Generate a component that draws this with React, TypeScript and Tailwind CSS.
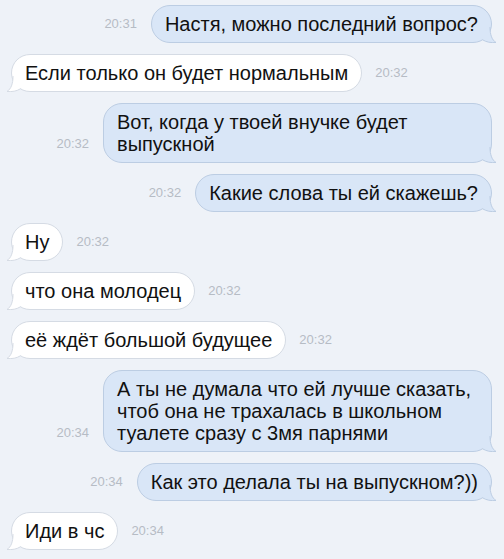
import React from 'react'

type Msg = { out: boolean; time: string; text: React.ReactNode; wide?: boolean }

const messages: Msg[] = [
  { out: true, time: '20:31', text: 'Настя, можно последний вопрос?' },
  { out: false, time: '20:32', text: 'Если только он будет нормальным' },
  { out: true, time: '20:32', wide: true, text: <>Вот, когда у твоей внучке будет<br />выпускной</> },
  { out: true, time: '20:32', text: 'Какие слова ты ей скажешь?' },
  { out: false, time: '20:32', text: 'Ну' },
  { out: false, time: '20:32', text: 'что она молодец' },
  { out: false, time: '20:32', text: 'её ждёт большой будущее' },
  {
    out: true,
    time: '20:34',
    wide: true,
    text: <>А ты не думала что ей лучше сказать,<br />чтоб она не трахалась в школьном<br />туалете сразу с 3мя парнями</>,
  },
  { out: true, time: '20:34', text: 'Как это делала ты на выпускном?))' },
  { out: false, time: '20:34', text: 'Иди в чс' },
]

const OutTail = () => (
  <svg className="absolute -right-[6px] -bottom-[1px]" width="14" height="16" viewBox="0 0 14 16">
    <path d="M7 0 C7 8 9 13 13 15.5 C8 16 3 15 0 13 L0 0 Z" fill="#d9e6f7" />
    <path d="M7 0 C7 8 9 13 13 15.5 C8 16 3 15 0 13" fill="none" stroke="#bccde3" strokeWidth="1" />
  </svg>
)

const InTail = () => (
  <svg className="absolute -left-[6px] -bottom-[1px]" width="14" height="16" viewBox="0 0 14 16">
    <path d="M7 0 C7 8 5 13 1 15.5 C6 16 11 15 14 13 L14 0 Z" fill="#ffffff" />
    <path d="M7 0 C7 8 5 13 1 15.5 C6 16 11 15 14 13" fill="none" stroke="#d5dbe4" strokeWidth="1" />
  </svg>
)

const Time = ({ t }: { t: string }) => (
  <span className="pb-[8px] text-[13px] leading-[22px] text-[#b6bcc5] whitespace-nowrap">{t}</span>
)

const Bubble = ({ m }: { m: Msg }) =>
  m.out ? (
    <div className="flex justify-end items-end gap-[14px] pr-[12px]">
      <Time t={m.time} />
      <div
        className={`relative ${m.wide ? 'w-[389px]' : 'max-w-[389px]'} rounded-[19px] border border-[#bccde3] bg-[#d9e6f7] px-[13px] py-[7px] text-[20px] leading-[22px] text-[#111]`}
      >
        <OutTail />
        <span className="relative">{m.text}</span>
      </div>
    </div>
  ) : (
    <div className="flex justify-start items-end gap-[13px] pl-[11px]">
      <div className="relative max-w-[389px] rounded-[19px] border border-[#d5dbe4] bg-white px-[13px] py-[7px] text-[20px] leading-[22px] text-[#111]">
        <InTail />
        <span className="relative">{m.text}</span>
      </div>
      <Time t={m.time} />
    </div>
  )

export default function App() {
  return (
    <div
      className="w-[504px] h-[559px] overflow-hidden bg-[#eef2f8] pt-[5px] flex flex-col gap-[11px]"
      style={{ fontFamily: '"Liberation Sans", Arial, sans-serif' }}
    >
      {messages.map((m, i) => (
        <Bubble key={i} m={m} />
      ))}
    </div>
  )
}
